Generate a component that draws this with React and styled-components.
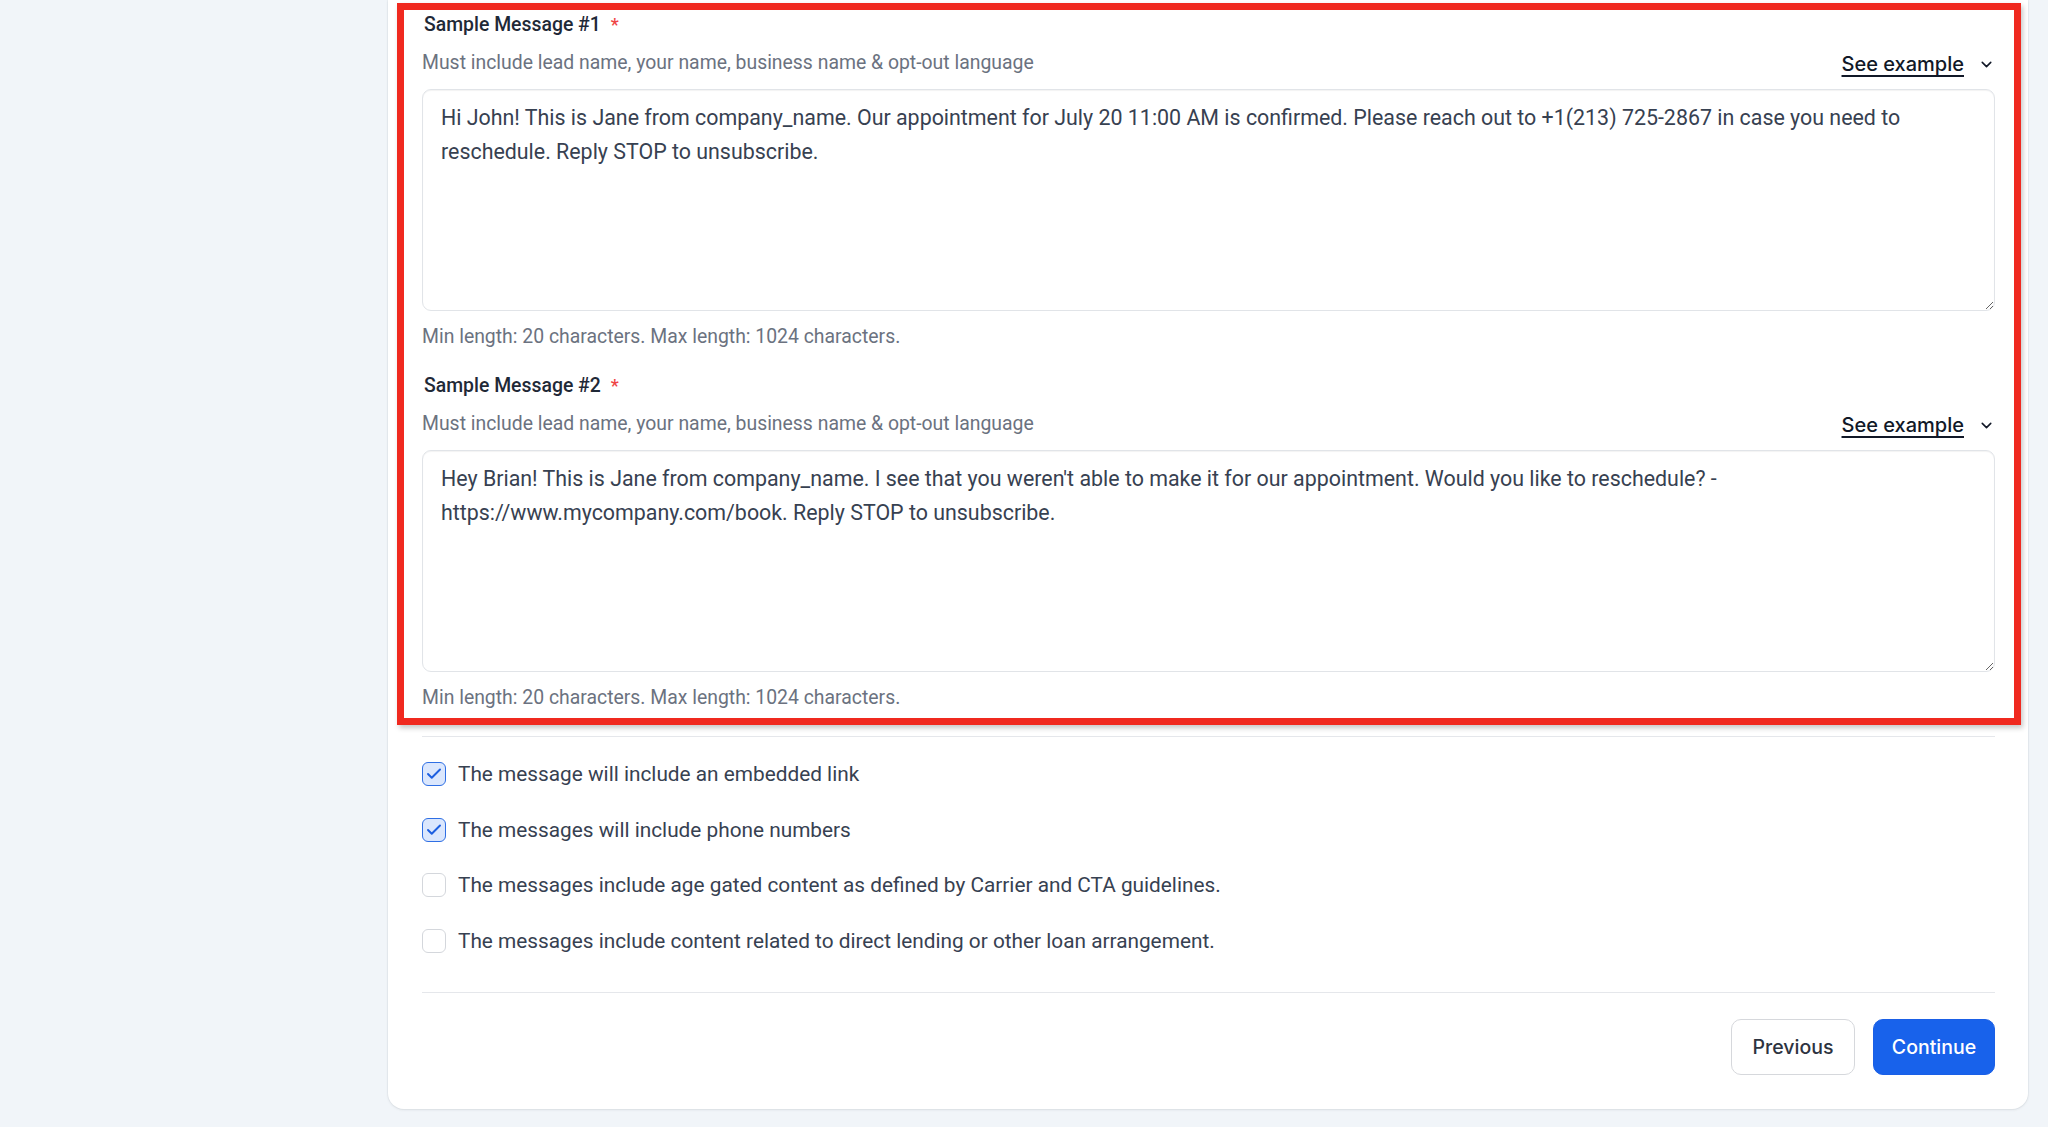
import React from "react";
import styled, { createGlobalStyle } from "styled-components";
import { ChevronDown, Check } from "lucide-react";

const GlobalStyle = createGlobalStyle`
  html, body {
    margin: 0;
    padding: 0;
    background: #f1f5f9;
  }
  body {
    font-family: Roboto, "Liberation Sans", sans-serif;
    -webkit-font-smoothing: antialiased;
  }
  * { box-sizing: border-box; }
`;

const Page = styled.div`
  display: flex;
  justify-content: flex-start;
  padding: 0 20px 21px 388px;
  min-height: 1127px;
`;

const Card = styled.main`
  width: 1640px;
  background: #ffffff;
  border-radius: 0 0 16px 16px;
  box-shadow: 0 1px 3px rgba(15, 23, 42, 0.08), 0 0 0 1px rgba(15, 23, 42, 0.03);
  padding: 0 33px 34px 34px;
  display: flex;
  flex-direction: column;
`;

const Highlight = styled.section`
  margin: 3px -26px 0 -25px;
  border: 7px solid #f0291f;
  box-shadow: 2px 3px 5px rgba(0, 0, 0, 0.22);
  padding: 0 19px 8px 18px;
  display: flex;
  flex-direction: column;
  gap: 22px;
`;

const Field = styled.div`
  display: flex;
  flex-direction: column;
`;

const Label = styled.label`
  margin-top: 3px;
  padding-left: 2px;
  font-size: 19.4px;
  line-height: 24px;
  font-weight: 500;
  color: #1f2937;
  display: flex;
  align-items: center;
`;

const Required = styled.span`
  color: #ef4444;
  margin-left: 10px;
  font-size: 18px;
`;

const HelperRow = styled.div`
  margin-top: 14px;
  display: flex;
  justify-content: space-between;
  align-items: center;
  height: 24px;
`;

const Helper = styled.span`
  font-size: 19.4px;
  line-height: 24px;
  color: #6b7280;
`;

const ExampleToggle = styled.button`
  border: 0;
  background: none;
  padding: 0;
  display: flex;
  align-items: center;
  gap: 14px;
  font-family: Inter, "Liberation Sans", sans-serif;
  font-size: 20px;
  line-height: 24px;
  font-weight: 500;
  color: #111827;
  cursor: pointer;
  margin-top: 2px;

  span {
    text-decoration: underline;
    text-underline-offset: 4px;
    text-decoration-thickness: 1.5px;
  }
`;

const MessageBox = styled.textarea`
  margin-top: 14px;
  width: 100%;
  height: 222px;
  resize: vertical;
  border: 1px solid #e1e4e8;
  border-radius: 9px;
  box-shadow: inset 0 1px 1px rgba(0, 0, 0, 0.05);
  padding: 11px 18px 9px;
  font-family: Roboto, "Liberation Sans", sans-serif;
  font-size: 21.4px;
  line-height: 34px;
  color: #374151;
  background: #fff;
  outline: none;
`;

const Hint = styled.div`
  margin-top: 14px;
  font-size: 19.4px;
  line-height: 24px;
  color: #6b7280;
`;

const Divider = styled.hr`
  border: 0;
  border-top: 1px solid #e5e7eb;
  margin: ${(p) => p.$mt}px 0 0;
  width: 100%;
`;

const Checklist = styled.div`
  margin-top: 25px;
  display: flex;
  flex-direction: column;
  gap: 31.5px;
`;

const CheckRow = styled.label`
  display: flex;
  align-items: center;
  gap: 12px;
  height: 24px;
  font-size: 20.8px;
  color: #374151;
`;

const Box = styled.span`
  width: 24px;
  height: 24px;
  flex: none;
  border-radius: 6px;
  border: 1.5px solid ${(p) => (p.$checked ? "#2f6fe4" : "#d4d7dc")};
  background: ${(p) => (p.$checked ? "#dbe7fd" : "#ffffff")};
  display: flex;
  align-items: center;
  justify-content: center;
  color: #1d5fe0;
`;

const Actions = styled.div`
  margin-top: 26px;
  display: flex;
  justify-content: flex-end;
  gap: 18px;
`;

const Button = styled.button`
  height: 56px;
  padding: 0;
  width: ${(p) => (p.$primary ? 122 : 124)}px;
  border-radius: 10px;
  font-family: Inter, "Liberation Sans", sans-serif;
  font-size: 19.5px;
  font-weight: 500;
  cursor: pointer;
  border: 1px solid ${(p) => (p.$primary ? "#1a5fe6" : "#d6d8dc")};
  background: ${(p) => (p.$primary ? "#1862eb" : "#ffffff")};
  color: ${(p) => (p.$primary ? "#ffffff" : "#2d3340")};
`;

const messages = [
  {
    title: "Sample Message #1",
    text:
      "Hi John! This is Jane from company_name. Our appointment for July 20 11:00 AM is confirmed. Please reach out to +1(213) 725-2867 in case you need to reschedule. Reply STOP to unsubscribe.",
  },
  {
    title: "Sample Message #2",
    text:
      "Hey Brian! This is Jane from company_name. I see that you weren't able to make it for our appointment. Would you like to reschedule? - https://www.mycompany.com/book. Reply STOP to unsubscribe.",
  },
];

const checks = [
  { label: "The message will include an embedded link", checked: true },
  { label: "The messages will include phone numbers", checked: true },
  {
    label: "The messages include age gated content as defined by Carrier and CTA guidelines.",
    checked: false,
  },
  {
    label: "The messages include content related to direct lending or other loan arrangement.",
    checked: false,
  },
];

export default function App() {
  return (
    <>
      <GlobalStyle />
      <Page>
        <Card>
          <Highlight>
            {messages.map((m) => (
              <Field key={m.title}>
                <Label>
                  {m.title}
                  <Required>*</Required>
                </Label>
                <HelperRow>
                  <Helper>Must include lead name, your name, business name &amp; opt-out language</Helper>
                  <ExampleToggle type="button">
                    <span>See example</span>
                    <ChevronDown size={17} strokeWidth={2.2} />
                  </ExampleToggle>
                </HelperRow>
                <MessageBox defaultValue={m.text} />
                <Hint>Min length: 20 characters. Max length: 1024 characters.</Hint>
              </Field>
            ))}
          </Highlight>
          <Divider $mt={11} />
          <Checklist>
            {checks.map((c) => (
              <CheckRow key={c.label}>
                <Box $checked={c.checked}>
                  {c.checked && <Check size={18} strokeWidth={2.6} />}
                </Box>
                {c.label}
              </CheckRow>
            ))}
          </Checklist>
          <Divider $mt={39} />
          <Actions>
            <Button type="button">Previous</Button>
            <Button type="button" $primary>
              Continue
            </Button>
          </Actions>
        </Card>
      </Page>
    </>
  );
}
